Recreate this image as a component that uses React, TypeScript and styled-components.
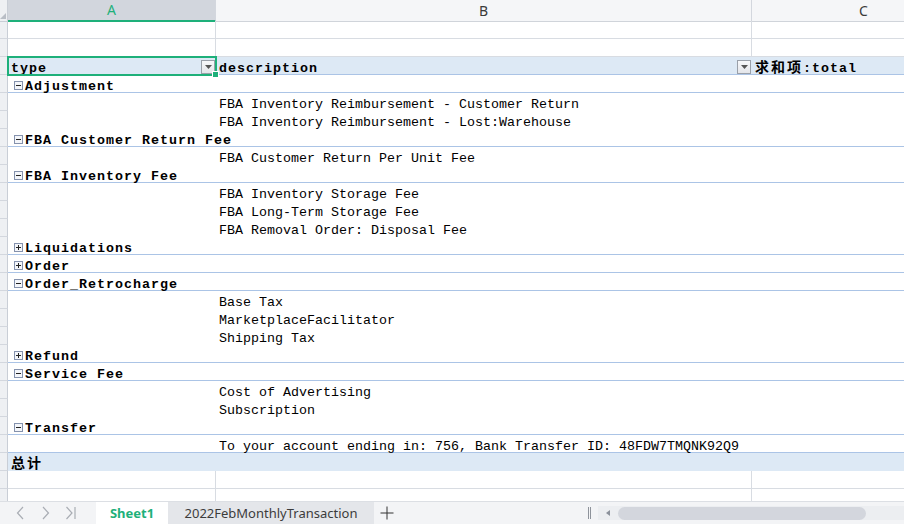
import React from 'react';
import styled, { createGlobalStyle } from 'styled-components';

const COLS = '8px 208px 536px 224px';
const MONO = `"Liberation Mono", "Noto Sans CJK SC", monospace`;
const GREEN = '#1eb07a';
const PIVOT_LINE = '#abc4e6';
const GRID_LINE = '#d8dce2';
const BAND = '#dde9f5';

const GlobalStyle = createGlobalStyle`
  html, body {
    margin: 0;
    padding: 0;
    background: #ffffff;
  }
  body {
    overflow: hidden;
  }
`;

type PivotRow =
  | { kind: 'group'; label: string; open: boolean }
  | { kind: 'detail'; text: string; divider?: boolean };

const pivotRows: PivotRow[] = [
  { kind: 'group', label: 'Adjustment', open: true },
  { kind: 'detail', text: 'FBA Inventory Reimbursement - Customer Return' },
  { kind: 'detail', text: 'FBA Inventory Reimbursement - Lost:Warehouse' },
  { kind: 'group', label: 'FBA Customer Return Fee', open: true },
  { kind: 'detail', text: 'FBA Customer Return Per Unit Fee' },
  { kind: 'group', label: 'FBA Inventory Fee', open: true },
  { kind: 'detail', text: 'FBA Inventory Storage Fee' },
  { kind: 'detail', text: 'FBA Long-Term Storage Fee' },
  { kind: 'detail', text: 'FBA Removal Order: Disposal Fee' },
  { kind: 'group', label: 'Liquidations', open: false },
  { kind: 'group', label: 'Order', open: false },
  { kind: 'group', label: 'Order_Retrocharge', open: true },
  { kind: 'detail', text: 'Base Tax' },
  { kind: 'detail', text: 'MarketplaceFacilitator' },
  { kind: 'detail', text: 'Shipping Tax' },
  { kind: 'group', label: 'Refund', open: false },
  { kind: 'group', label: 'Service Fee', open: true },
  { kind: 'detail', text: 'Cost of Advertising' },
  { kind: 'detail', text: 'Subscription' },
  { kind: 'group', label: 'Transfer', open: true },
  { kind: 'detail', text: 'To your account ending in: 756, Bank Transfer ID: 48FDW7TMQNK92Q9', divider: true },
];

const ToggleIcon: React.FC<{ open: boolean }> = ({ open }) => (
  <ToggleBox width="9" height="9" viewBox="0 0 9 9">
    <rect x="0.5" y="0.5" width="8" height="8" fill="#f4f6fa" stroke="#8592ad" />
    <line x1="2" y1="4.5" x2="7" y2="4.5" stroke="#222" />
    {!open && <line x1="4.5" y1="2" x2="4.5" y2="7" stroke="#222" />}
  </ToggleBox>
);

const FilterButton: React.FC = () => (
  <Dropdown>
    <svg width="7" height="4" viewBox="0 0 7 4">
      <path d="M0 0 H7 L3.5 4 Z" fill="#555" />
    </svg>
  </Dropdown>
);

const Chevron: React.FC<{ dir: 'left' | 'right' | 'last' }> = ({ dir }) => (
  <NavIcon width="12" height="16" viewBox="0 0 12 16">
    {dir === 'left' && <path d="M8 2 L2.5 8 L8 14" fill="none" stroke="#a9adb4" strokeWidth="1.2" />}
    {dir === 'right' && <path d="M3 2 L8.5 8 L3 14" fill="none" stroke="#a9adb4" strokeWidth="1.2" />}
    {dir === 'last' && (
      <>
        <path d="M1.5 2 L7 8 L1.5 14" fill="none" stroke="#a9adb4" strokeWidth="1.2" />
        <line x1="10" y1="2" x2="10" y2="14" stroke="#a9adb4" strokeWidth="1.2" />
      </>
    )}
  </NavIcon>
);

export default function App() {
  return (
    <Sheet>
      <GlobalStyle />
      <GridArea>
        <HeaderRow>
          <Corner />
          <ColHead $active>A</ColHead>
          <ColHead>B</ColHead>
          <ColHead>C</ColHead>
        </HeaderRow>

        {[0, 1].map((i) => (
          <Row key={'top' + i}>
            <RowHead />
            <Cell $line="grid" $vline />
            <Cell $line="grid" $vline />
            <Cell $line="grid" />
          </Row>
        ))}

        <Row $relative>
          <RowHead />
          <Cell $line="pivot" $band $flex>
            <Label $bold>type</Label>
            <FilterButton />
          </Cell>
          <Cell $line="pivot" $band $flex>
            <Label $bold>description</Label>
            <FilterButton />
          </Cell>
          <Cell $line="pivot" $band>
            <Label $bold>
              <Cjk>求和项</Cjk>:total
            </Label>
          </Cell>
          <Selection>
            <Handle />
          </Selection>
        </Row>

        {pivotRows.map((r, i) =>
          r.kind === 'group' ? (
            <Row key={i}>
              <RowHead />
              <Cell $line="pivot" $group>
                <ToggleIcon open={r.open} />
                <Label $bold>{r.label}</Label>
              </Cell>
              <Cell $line="pivot" />
              <Cell $line="pivot" />
            </Row>
          ) : (
            <Row key={i}>
              <RowHead />
              <Cell $line={r.divider ? 'pivot' : 'none'} />
              <Cell $line={r.divider ? 'pivot' : 'none'}>
                <Label>{r.text}</Label>
              </Cell>
              <Cell $line={r.divider ? 'pivot' : 'none'} />
            </Row>
          )
        )}

        <Row>
          <RowHead />
          <Cell $line="none" $band>
            <Label $bold>
              <Cjk>总计</Cjk>
            </Label>
          </Cell>
          <Cell $line="none" $band />
          <Cell $line="none" $band />
        </Row>

        {[0, 1].map((i) => (
          <Row key={'bottom' + i}>
            <RowHead />
            <Cell $line="grid" $vline />
            <Cell $line="grid" $vline />
            <Cell $line="grid" />
          </Row>
        ))}
      </GridArea>

      <TabBar>
        <NavGroup>
          <Chevron dir="left" />
          <Chevron dir="right" />
          <Chevron dir="last" />
        </NavGroup>
        <Tab $active>Sheet1</Tab>
        <Tab>2022FebMonthlyTransaction</Tab>
        <AddTab width="14" height="14" viewBox="0 0 14 14">
          <line x1="7" y1="0.5" x2="7" y2="13.5" stroke="#333" />
          <line x1="0.5" y1="7" x2="13.5" y2="7" stroke="#333" />
        </AddTab>
        <Splitter />
        <ScrollTrack>
          <svg width="4" height="6" viewBox="0 0 4 6">
            <path d="M4 0 V6 L0 3 Z" fill="#8b919b" />
          </svg>
          <ScrollThumb />
        </ScrollTrack>
      </TabBar>
    </Sheet>
  );
}

const Sheet = styled.div`
  width: 904px;
  height: 524px;
  display: flex;
  flex-direction: column;
  overflow: hidden;
  background: #ffffff;
`;

const GridArea = styled.div`
  height: 501px;
  overflow: hidden;
  flex: none;
`;

const HeaderRow = styled.div`
  display: grid;
  grid-template-columns: ${COLS};
  height: 21px;
`;

const Corner = styled.div`
  position: relative;
  box-sizing: border-box;
  background: #eef0f3;
  border-right: 1px solid #c9ced6;
  border-bottom: 1px solid #c9ced6;

  &::after {
    content: '';
    position: absolute;
    left: 0;
    bottom: 2px;
    border-left: 6px solid transparent;
    border-bottom: 6px solid #b9bec6;
  }
`;

const ColHead = styled.div<{ $active?: boolean }>`
  box-sizing: border-box;
  display: flex;
  align-items: center;
  justify-content: center;
  padding-bottom: 1px;
  font-family: 'Noto Sans', sans-serif;
  font-size: 14px;
  color: ${(p) => (p.$active ? GREEN : '#3a3a3a')};
  background: ${(p) => (p.$active ? '#d2d6dd' : '#f5f6f8')};
  border-right: 1px solid #d3d7de;
  border-bottom: ${(p) => (p.$active ? `2px solid ${GREEN}` : '1px solid #d0d4da')};
`;

const Row = styled.div<{ $relative?: boolean }>`
  display: grid;
  grid-template-columns: ${COLS};
  height: 18px;
  position: ${(p) => (p.$relative ? 'relative' : 'static')};
`;

const RowHead = styled.div`
  box-sizing: border-box;
  background: #eef0f3;
  border-right: 1px solid #c9ced6;
  border-bottom: 1px solid #d3d7de;
`;

const Cell = styled.div<{
  $line: 'grid' | 'pivot' | 'none';
  $vline?: boolean;
  $band?: boolean;
  $flex?: boolean;
  $group?: boolean;
}>`
  box-sizing: border-box;
  height: 18px;
  min-width: 0;
  padding: 0 3px;
  display: ${(p) => (p.$flex || p.$group ? 'flex' : 'block')};
  align-items: flex-start;
  white-space: nowrap;
  background: ${(p) => (p.$band ? BAND : 'transparent')};
  border-right: ${(p) => (p.$vline ? `1px solid ${GRID_LINE}` : 'none')};
  border-bottom: ${(p) =>
    p.$line === 'grid'
      ? `1px solid ${GRID_LINE}`
      : p.$line === 'pivot'
      ? `1px solid ${PIVOT_LINE}`
      : '1px solid transparent'};
  ${(p) => (p.$group ? 'padding-left: 6px; overflow: visible;' : '')}
`;

const Label = styled.span<{ $bold?: boolean }>`
  display: inline-block;
  padding-top: 3px;
  line-height: 18px;
  font-family: ${MONO};
  font-size: 13.33px;
  color: #000;
  font-weight: ${(p) => (p.$bold ? 700 : 400)};
  letter-spacing: ${(p) => (p.$bold ? '1px' : '0')};
`;

const Cjk = styled.span`
  font-family: 'Noto Sans CJK SC', sans-serif;
  font-size: 14px;
  line-height: 12px;
  letter-spacing: 2px;
`;

const ToggleBox = styled.svg`
  flex: none;
  margin: 6px 2px 0 0;
`;

const Dropdown = styled.span`
  flex: none;
  box-sizing: border-box;
  width: 14px;
  height: 14px;
  margin: 3px -2px 0 auto;
  display: flex;
  align-items: center;
  justify-content: center;
  border: 1px solid #9aa0a9;
  background: linear-gradient(#f7f8fa, #e4e6ea);
`;

const Selection = styled.div`
  position: absolute;
  left: 7px;
  top: -1px;
  width: 210px;
  height: 20px;
  box-sizing: border-box;
  border: 2px solid ${GREEN};
  pointer-events: none;
`;

const Handle = styled.div`
  position: absolute;
  right: -4px;
  bottom: -4px;
  width: 5px;
  height: 5px;
  background: ${GREEN};
  border: 1px solid #ffffff;
`;

const TabBar = styled.div`
  flex: 1;
  box-sizing: border-box;
  display: flex;
  align-items: stretch;
  background: #f3f4f6;
  border-top: 1px solid #dcdfe4;
`;

const NavGroup = styled.div`
  width: 96px;
  display: flex;
  align-items: center;
  gap: 13px;
  padding-left: 15px;
  box-sizing: border-box;
`;

const NavIcon = styled.svg`
  flex: none;
`;

const Tab = styled.div<{ $active?: boolean }>`
  display: flex;
  align-items: center;
  justify-content: center;
  width: ${(p) => (p.$active ? '72px' : '206px')};
  font-family: 'Noto Sans', sans-serif;
  font-size: 13px;
  font-weight: ${(p) => (p.$active ? 700 : 400)};
  color: ${(p) => (p.$active ? GREEN : '#3c3c3c')};
  background: ${(p) => (p.$active ? '#ffffff' : '#e4e6ea')};
`;

const AddTab = styled.svg`
  align-self: center;
  margin-left: 6px;
`;

const Splitter = styled.div`
  margin-left: auto;
  align-self: center;
  width: 3px;
  height: 12px;
  margin-right: 7px;
  border-left: 1px solid #8e939b;
  border-right: 1px solid #8e939b;
  box-sizing: border-box;
`;

const ScrollTrack = styled.div`
  width: 306px;
  align-self: center;
  height: 14px;
  display: flex;
  align-items: center;
  gap: 8px;
  padding-left: 8px;
  box-sizing: border-box;
  background: #eceef1;
`;

const ScrollThumb = styled.div`
  width: 248px;
  height: 13px;
  border-radius: 7px;
  background: #d3d6dd;
`;
